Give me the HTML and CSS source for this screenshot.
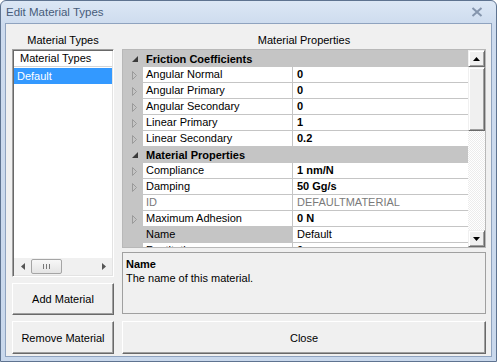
FILE: index.html
```html
<!DOCTYPE html>
<html lang="en">
<head>
  <meta charset="UTF-8">
  <title>Edit Material Types</title>
  <link rel="stylesheet" href="styles.css">
</head>
<body>
  <div class="window">
    <div class="titlebar">
      <span class="title">Edit Material Types</span>
      <svg class="close-x" width="12" height="10" viewBox="0 0 12 10">
        <path d="M1.5 1 L10.5 9 M10.5 1 L1.5 9" stroke="#8595ad" stroke-width="2" fill="none"/>
      </svg>
    </div>

    <div class="client">
      <!-- left: list of materials -->
      <div class="col left-col">
        <div class="caption">Material Types</div>
        <div class="listbox">
          <div class="list-head">Material Types</div>
          <div class="list-row selected">Default</div>
          <div class="list-fill"></div>
          <div class="hscroll">
            <span class="harrow">
              <svg width="4" height="7" viewBox="0 0 4 7"><path d="M4 0 L0 3.5 L4 7 Z" fill="#555"/></svg>
            </span>
            <span class="hthumb">
              <svg width="7" height="5" viewBox="0 0 7 5"><path d="M0.5 0 V5 M3.5 0 V5 M6.5 0 V5" stroke="#777" stroke-width="1"/></svg>
            </span>
            <span class="htrack"></span>
            <span class="harrow">
              <svg width="4" height="7" viewBox="0 0 4 7"><path d="M0 0 L4 3.5 L0 7 Z" fill="#555"/></svg>
            </span>
          </div>
        </div>
        <button class="btn add-btn">Add Material</button>
        <button class="btn remove-btn">Remove Material</button>
      </div>

      <!-- right: property grid -->
      <div class="col right-col">
        <div class="caption">Material Properties</div>
        <div class="propgrid">
          <div class="rows">
            <div class="cat">
              <span class="marg"><svg width="6" height="6" viewBox="0 0 6 6"><path d="M6 0 V6 H0 Z" fill="#3a3a3a"/></svg></span>
              <span>Friction Coefficients</span>
            </div>
            <div class="prop">
              <span class="marg"><svg width="5" height="9" viewBox="0 0 5 9"><path d="M0.5 0.5 L4.5 4.5 L0.5 8.5 Z" fill="none" stroke="#9a9a9a"/></svg></span>
              <span class="pname">Angular Normal</span><span class="pval">0</span>
            </div>
            <div class="prop">
              <span class="marg"><svg width="5" height="9" viewBox="0 0 5 9"><path d="M0.5 0.5 L4.5 4.5 L0.5 8.5 Z" fill="none" stroke="#9a9a9a"/></svg></span>
              <span class="pname">Angular Primary</span><span class="pval">0</span>
            </div>
            <div class="prop">
              <span class="marg"><svg width="5" height="9" viewBox="0 0 5 9"><path d="M0.5 0.5 L4.5 4.5 L0.5 8.5 Z" fill="none" stroke="#9a9a9a"/></svg></span>
              <span class="pname">Angular Secondary</span><span class="pval">0</span>
            </div>
            <div class="prop">
              <span class="marg"><svg width="5" height="9" viewBox="0 0 5 9"><path d="M0.5 0.5 L4.5 4.5 L0.5 8.5 Z" fill="none" stroke="#9a9a9a"/></svg></span>
              <span class="pname">Linear Primary</span><span class="pval">1</span>
            </div>
            <div class="prop">
              <span class="marg"><svg width="5" height="9" viewBox="0 0 5 9"><path d="M0.5 0.5 L4.5 4.5 L0.5 8.5 Z" fill="none" stroke="#9a9a9a"/></svg></span>
              <span class="pname">Linear Secondary</span><span class="pval">0.2</span>
            </div>
            <div class="cat">
              <span class="marg"><svg width="6" height="6" viewBox="0 0 6 6"><path d="M6 0 V6 H0 Z" fill="#3a3a3a"/></svg></span>
              <span>Material Properties</span>
            </div>
            <div class="prop">
              <span class="marg"><svg width="5" height="9" viewBox="0 0 5 9"><path d="M0.5 0.5 L4.5 4.5 L0.5 8.5 Z" fill="none" stroke="#9a9a9a"/></svg></span>
              <span class="pname">Compliance</span><span class="pval">1 nm/N</span>
            </div>
            <div class="prop">
              <span class="marg"><svg width="5" height="9" viewBox="0 0 5 9"><path d="M0.5 0.5 L4.5 4.5 L0.5 8.5 Z" fill="none" stroke="#9a9a9a"/></svg></span>
              <span class="pname">Damping</span><span class="pval">50 Gg/s</span>
            </div>
            <div class="prop readonly">
              <span class="marg"></span>
              <span class="pname">ID</span><span class="pval">DEFAULTMATERIAL</span>
            </div>
            <div class="prop">
              <span class="marg"><svg width="5" height="9" viewBox="0 0 5 9"><path d="M0.5 0.5 L4.5 4.5 L0.5 8.5 Z" fill="none" stroke="#9a9a9a"/></svg></span>
              <span class="pname">Maximum Adhesion</span><span class="pval">0 N</span>
            </div>
            <div class="prop active">
              <span class="marg"></span>
              <span class="pname">Name</span><span class="pval plain">Default</span>
            </div>
            <div class="prop">
              <span class="marg"><svg width="5" height="9" viewBox="0 0 5 9"><path d="M0.5 0.5 L4.5 4.5 L0.5 8.5 Z" fill="none" stroke="#9a9a9a"/></svg></span>
              <span class="pname">Restitution</span><span class="pval">0</span>
            </div>
          </div>
          <div class="vscroll">
            <span class="vbtn">
              <svg width="7" height="4" viewBox="0 0 7 4"><path d="M0 4 L3.5 0 L7 4 Z" fill="#000"/></svg>
            </span>
            <span class="vthumb"></span>
            <span class="vtrack"></span>
            <span class="vbtn">
              <svg width="7" height="4" viewBox="0 0 7 4"><path d="M0 0 L3.5 4 L7 0 Z" fill="#000"/></svg>
            </span>
          </div>
        </div>
        <div class="desc">
          <div class="desc-title">Name</div>
          <div>The name of this material.</div>
        </div>
        <button class="btn close-btn">Close</button>
      </div>
    </div>
  </div>
</body>
</html>
```

FILE: styles.css
```css
* {
  box-sizing: border-box;
}
body {
  margin: 0;
  font-family: "Liberation Sans", Arial, sans-serif;
  font-size: 11px;
  color: #000;
  background: #fff;
}
.window {
  width: 497px;
  height: 362px;
  border: 1px solid #5e7390;
  border-radius: 6px 6px 0 0;
  background: linear-gradient(#dce7f5, #cddbee 24px, #c9d8ec);
  display: flex;
  flex-direction: column;
}
.titlebar {
  height: 22px;
  display: flex;
  align-items: center;
  justify-content: space-between;
  padding: 0 13px 0 5px;
}
.title {
  font-size: 11.5px;
  color: #475c7a;
}
.client {
  flex: 1;
  margin: 0 4px 4px;
  border: 1px solid #8fa3bf;
  background: #f0f0f0;
  display: flex;
  gap: 8px;
  padding: 8px 5px 2px 6px;
}
.col {
  display: flex;
  flex-direction: column;
}
.left-col {
  width: 102px;
}
.right-col {
  flex: 1;
}
.caption {
  height: 17px;
  text-align: center;
  line-height: 17px;
}

/* list of materials */
.listbox {
  height: 228px;
  display: flex;
  flex-direction: column;
  background: #fff;
  border: 1px solid;
  border-color: #a0a0a0 #fff #fff #a0a0a0;
  box-shadow: inset 1px 1px #696969, inset -1px -1px #e3e3e3;
  padding: 1px;
  margin-bottom: 6px;
}
.list-head {
  height: 16px;
  line-height: 15px;
  padding-left: 6px;
  border-bottom: 1px solid #d5d5d5;
  margin-bottom: 1px;
}
.list-row {
  height: 16px;
  line-height: 16px;
  padding-left: 3px;
}
.list-row.selected {
  background: #3399ff;
  color: #fff;
}
.list-fill {
  flex: 1;
}
.hscroll {
  height: 17px;
  display: flex;
  align-items: center;
  background: #f0f0f0;
}
.harrow {
  width: 17px;
  display: flex;
  justify-content: center;
}
.hthumb {
  width: 31px;
  height: 15px;
  display: flex;
  align-items: center;
  justify-content: center;
  background: linear-gradient(#f7f7f7, #e4e4e4);
  border: 1px solid #a5a5a5;
  border-radius: 2px;
}
.htrack {
  flex: 1;
}

/* buttons */
.btn {
  font-family: inherit;
  font-size: 11px;
  color: #000;
  background: #f0f0f0;
  border: 1px solid;
  border-color: #fff #696969 #696969 #fff;
  box-shadow: inset -1px -1px #a0a0a0;
  padding: 0;
}
.add-btn {
  height: 32px;
  margin-bottom: 6px;
}
.remove-btn,
.close-btn {
  height: 33px;
}

/* property grid */
.propgrid {
  height: 199px;
  display: flex;
  border: 1px solid #b8b8b8;
  background: #c5c5c5;
  margin-bottom: 4px;
}
.rows {
  flex: 1;
  overflow: hidden;
  padding-top: 1px;
}
.cat,
.prop {
  height: 16px;
  display: flex;
}
.marg {
  width: 20px;
  display: flex;
  align-items: center;
  justify-content: center;
  padding-left: 3px;
}
.cat {
  font-weight: bold;
  line-height: 16px;
}
.cat span:last-child {
  padding-left: 3px;
}
.pname,
.pval {
  background: #fff;
  height: 15px;
  line-height: 15px;
  padding-left: 3px;
  white-space: nowrap;
}
.pname {
  width: 149px;
  margin-right: 1px;
}
.pval {
  flex: 1;
  font-weight: bold;
  padding-left: 4px;
}
.pval.plain {
  font-weight: normal;
}
.readonly .pname,
.readonly .pval {
  color: #7a7a7a;
  font-weight: normal;
}
.active .pname {
  background: #c5c5c5;
}
.vscroll {
  width: 17px;
  display: flex;
  flex-direction: column;
  background: repeating-conic-gradient(#fff 0 25%, #ececec 0 50%) 0 0 / 2px 2px;
}
.vbtn,
.vthumb {
  background: #f0f0f0;
  border: 1px solid;
  border-color: #f0f0f0 #696969 #696969 #f0f0f0;
  box-shadow: inset 1px 1px #fff, inset -1px -1px #a0a0a0;
}
.vbtn {
  height: 17px;
  display: flex;
  align-items: center;
  justify-content: center;
}
.vthumb {
  height: 64px;
}
.vtrack {
  flex: 1;
}

/* description panel */
.desc {
  height: 62px;
  border: 1px solid #a0a0a0;
  padding: 4px 3px;
  line-height: 14px;
  margin-bottom: 7px;
}
.desc-title {
  font-weight: bold;
}
```
